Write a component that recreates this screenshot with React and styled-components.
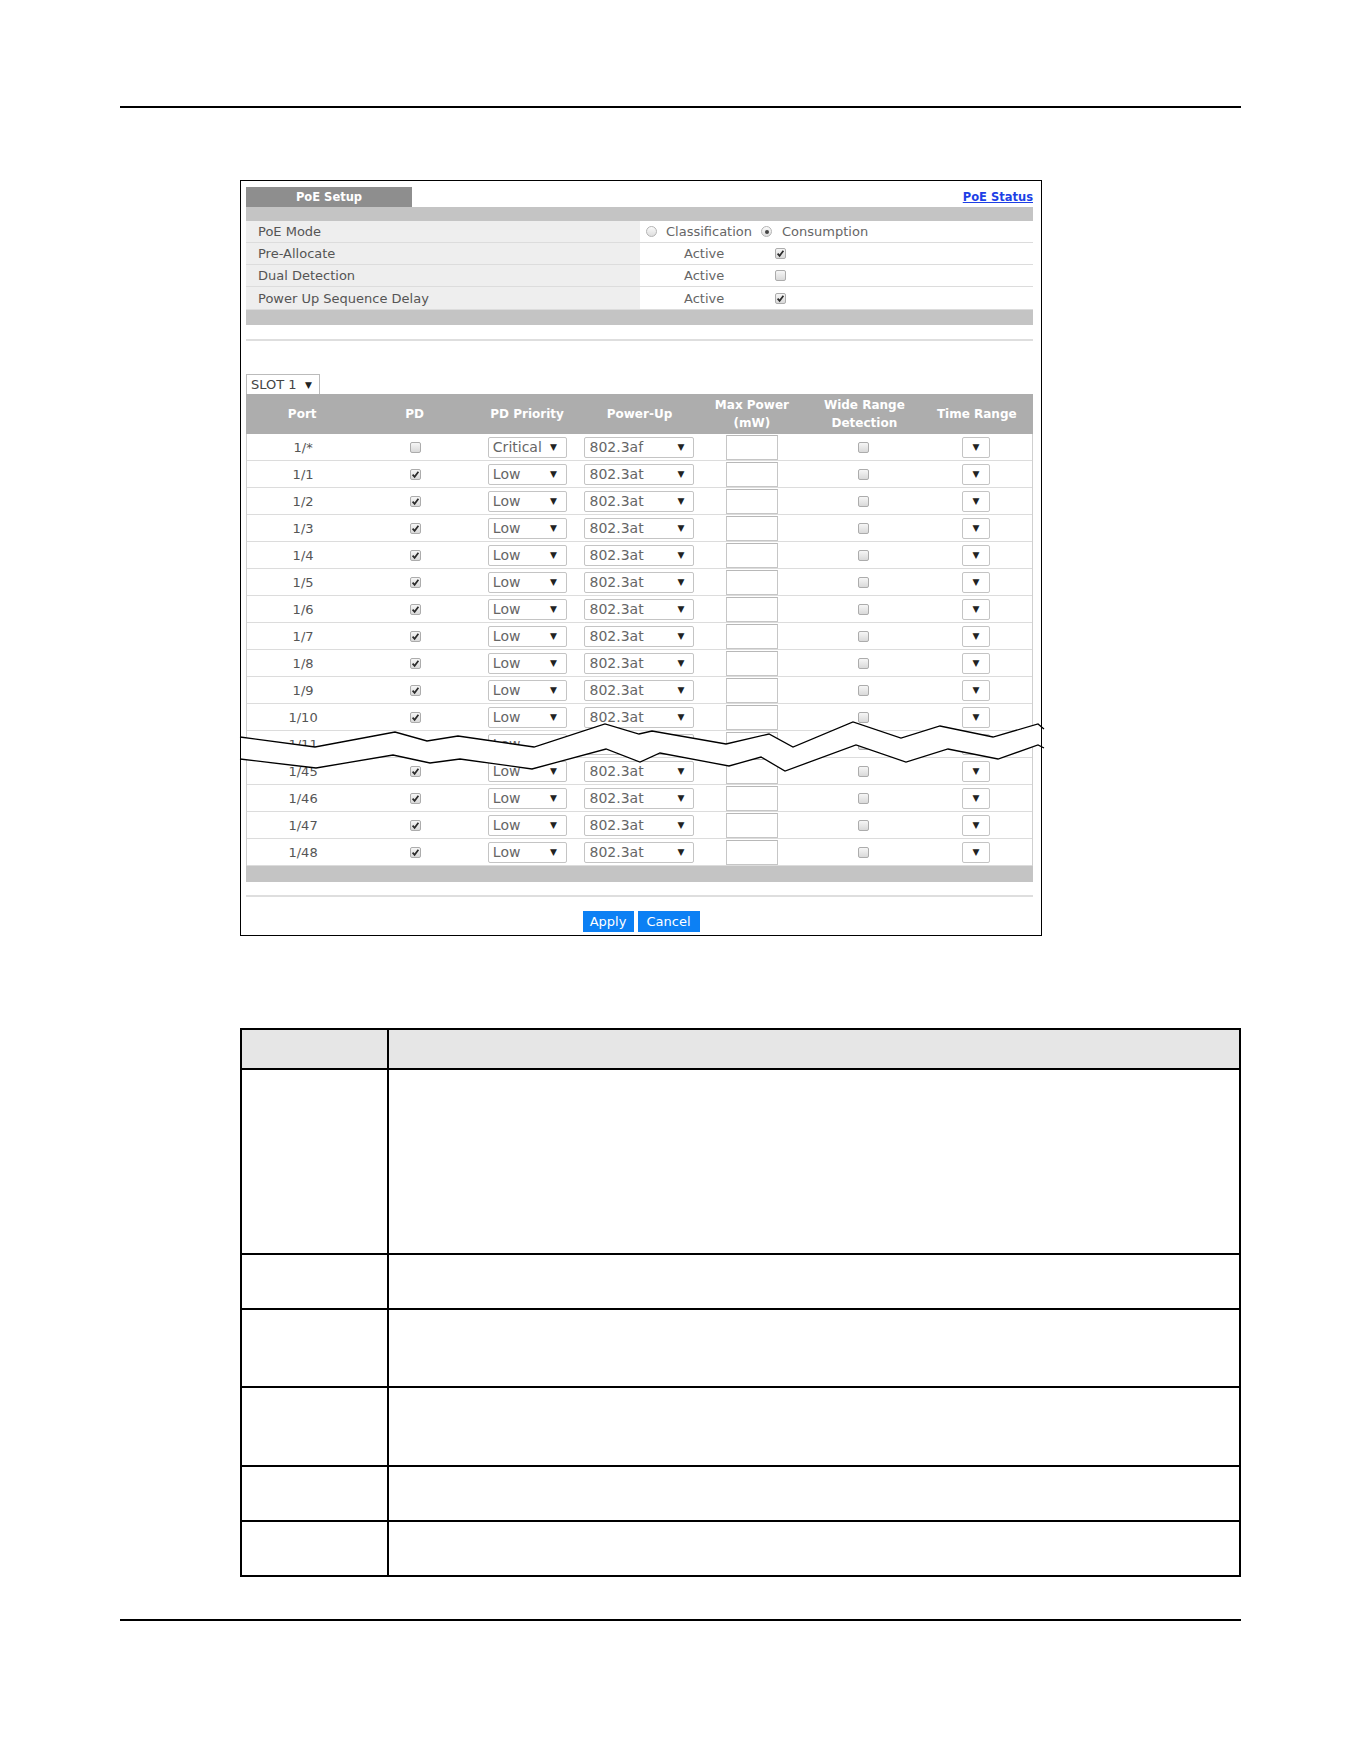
import React from 'react'
import styled, { createGlobalStyle } from 'styled-components'

const GlobalStyle = createGlobalStyle`
  html, body {
    margin: 0;
    padding: 0;
    background: #fff;
  }
  body {
    font-family: "DejaVu Sans", "Liberation Sans", sans-serif;
    color: #555;
  }
`

const Page = styled.div`
  padding: 106px 0 0 120px;
  width: 1121px;
`

const Rule = styled.div`
  height: 2px;
  background: #000;
`

const Panel = styled.div`
  position: relative;
  box-sizing: border-box;
  margin: 72px 0 0 120px;
  width: 802px;
  height: 756px;
  border: 1px solid #000;
  padding: 6px 8px 0 5px;
  display: flex;
  flex-direction: column;
`

const TitleRow = styled.div`
  display: flex;
  justify-content: space-between;
  align-items: center;
  height: 20px;
`

const Tab = styled.div`
  width: 166px;
  height: 20px;
  background: #8e8e8e;
  color: #fff;
  font-weight: bold;
  font-size: 11.5px;
  display: flex;
  align-items: center;
  justify-content: center;
`

const StatusLink = styled.a`
  color: #1d3fe6;
  font-weight: bold;
  font-size: 11.5px;
  text-decoration: underline;
  cursor: pointer;
`

const GrayBar = styled.div`
  height: ${p => p.$h || 14}px;
  background: #c4c4c4;
`

const SetupRow = styled.div`
  display: grid;
  grid-template-columns: 394px 1fr;
  height: ${p => p.$h || 22}px;
  border-bottom: 1px solid #dcdcdc;
  box-sizing: border-box;
  font-size: 13px;
`

const Label = styled.div`
  background: #eeeeee;
  padding-left: 12px;
  display: flex;
  align-items: center;
  color: #555;
`

const Value = styled.div`
  background: #fff;
  padding-left: ${p => p.$pad}px;
  display: flex;
  align-items: center;
  color: #666;
`

const RadioLabel = styled.span`
  margin: 0 9px 0 ${p => p.$ml || 9}px;
`

const Radio = styled.span`
  box-sizing: border-box;
  width: 11px;
  height: 11px;
  border-radius: 50%;
  border: 1px solid #b4b4b4;
  background: linear-gradient(#fafafa, #dedede);
  display: inline-flex;
  align-items: center;
  justify-content: center;
  &::after {
    content: '';
    width: 4px;
    height: 4px;
    border-radius: 50%;
    background: ${p => (p.$on ? '#444' : 'transparent')};
  }
`

const Box = styled.span`
  box-sizing: border-box;
  width: 11px;
  height: 11px;
  border-radius: 2px;
  border: 1px solid #acacac;
  background: linear-gradient(#f6f6f6, #d9d9d9);
  display: inline-flex;
  align-items: center;
  justify-content: center;
  margin-left: ${p => p.$ml || 0}px;
`

const Checkbox = ({ checked, ml }) => (
  <Box $ml={ml}>
    {checked && (
      <svg width="9" height="9" viewBox="0 0 9 9">
        <path d="M1.6 4.6 L3.6 6.8 L7.4 1.8" fill="none" stroke="#2b2b2b" strokeWidth="1.7" />
      </svg>
    )}
  </Box>
)

const Separator = styled.div`
  height: 2px;
  background: #dedede;
  margin-top: ${p => p.$mt}px;
`

const SlotSelect = styled.div`
  box-sizing: border-box;
  margin-top: 33px;
  width: 74px;
  height: 20px;
  border: 1px solid #bbb;
  border-bottom: none;
  padding: 0 7px 0 4px;
  display: flex;
  align-items: center;
  justify-content: space-between;
  font-size: 13px;
  color: #444;
`

const Arrow = styled.span`
  font-size: 9px;
  color: #222;
`

const HeaderRow = styled.div`
  display: grid;
  grid-template-columns: repeat(7, 1fr);
  height: 40px;
  background: #adadad;
  color: #fff;
  font-weight: bold;
  font-size: 12px;
  line-height: 18px;
`

const HeadCell = styled.div`
  display: flex;
  align-items: center;
  justify-content: center;
  text-align: center;
`

const Body = styled.div`
  border-left: 1px solid #cfcfcf;
  border-right: 1px solid #cfcfcf;
`

const PortRow = styled.div`
  display: grid;
  grid-template-columns: repeat(7, 1fr);
  height: 27px;
  box-sizing: border-box;
  border-bottom: 1px solid #dcdcdc;
  font-size: 13px;
  color: #555;
`

const Cell = styled.div`
  display: flex;
  align-items: center;
  justify-content: center;
`

const Select = styled.div`
  box-sizing: border-box;
  width: ${p => p.$w}px;
  height: 21px;
  border: 1px solid #c4c4c4;
  border-radius: 2px;
  background: #fff;
  display: flex;
  align-items: center;
  justify-content: ${p => (p.$center ? 'center' : 'space-between')};
  padding: ${p => (p.$center ? '0' : '0 9px 0 4px')};
  color: #666;
  font-size: 14px;
`

const PowerInput = styled.div`
  box-sizing: border-box;
  width: 52px;
  height: 25px;
  border: 1px solid #c6c6c6;
  border-top-color: #b8b8b8;
  background: #fff;
`

const Actions = styled.div`
  margin-top: 14px;
  display: flex;
  justify-content: center;
  gap: 4px;
  padding-left: 3px;
`

const Button = styled.button`
  width: ${p => p.$w}px;
  height: 21px;
  border: none;
  background: #0c80f4;
  color: #fff;
  font-family: "DejaVu Sans", sans-serif;
  font-size: 13px;
  padding: 0;
`

const BreakMark = styled.svg`
  position: absolute;
  left: -1px;
  top: -1px;
  overflow: visible;
  pointer-events: none;
`

const DescTable = styled.div`
  margin: 92px 0 0 120px;
  width: 1001px;
  box-sizing: border-box;
  border: 2px solid #000;
`

const DescRow = styled.div`
  display: grid;
  grid-template-columns: 147px 1fr;
  height: ${p => p.$h}px;
  box-sizing: border-box;
  border-bottom: ${p => (p.$last ? 'none' : '2px solid #000')};
  background: ${p => (p.$head ? '#e6e6e6' : '#fff')};
`

const DescCell = styled.div`
  border-right: ${p => (p.$first ? '2px solid #000' : 'none')};
`

const BottomRule = styled(Rule)`
  margin-top: 42px;
`

const ports = [
  '1/*', '1/1', '1/2', '1/3', '1/4', '1/5', '1/6', '1/7', '1/8', '1/9', '1/10', '1/11',
  '1/45', '1/46', '1/47', '1/48',
]

// break mark drawn across the port list (rows 1/12 .. 1/44 left out)
const upper = [
  [0, 557], [75, 567], [155, 552], [187, 561], [218, 556], [294, 567], [365, 544], [399, 554],
  [412, 551], [486, 564], [529, 554], [553, 567], [613, 542], [661, 558], [700, 546], [753, 557],
  [798, 544], [804, 549],
]
const lower = [
  [0, 579], [76, 588], [153, 575], [190, 583], [220, 579], [292, 589], [366, 569], [400, 582],
  [420, 573], [489, 586], [521, 577], [545, 591], [616, 565], [666, 582], [708, 569], [758, 579],
  [798, 565], [804, 568],
]

const pts = arr => arr.map(p => p.join(',')).join(' ')
const fillPts =
  pts([[1, 557], ...upper.slice(1, -1), [801, 546.5]]) +
  ' ' +
  pts([[801, 566.5], ...lower.slice(1, -1).reverse(), [1, 579]])

const descRows = [185, 55, 78, 79, 55, 53]

const App = () => (
  <Page>
    <GlobalStyle />
    <Rule />
    <Panel>
      <TitleRow>
        <Tab>PoE Setup</Tab>
        <StatusLink>PoE Status</StatusLink>
      </TitleRow>
      <GrayBar />
      <SetupRow>
        <Label>PoE Mode</Label>
        <Value $pad={6}>
          <Radio />
          <RadioLabel>Classification</RadioLabel>
          <Radio $on />
          <RadioLabel $ml={10}>Consumption</RadioLabel>
        </Value>
      </SetupRow>
      <SetupRow>
        <Label>Pre-Allocate</Label>
        <Value $pad={44}>
          Active
          <Checkbox checked ml={51} />
        </Value>
      </SetupRow>
      <SetupRow>
        <Label>Dual Detection</Label>
        <Value $pad={44}>
          Active
          <Checkbox ml={51} />
        </Value>
      </SetupRow>
      <SetupRow $h={23}>
        <Label>Power Up Sequence Delay</Label>
        <Value $pad={44}>
          Active
          <Checkbox checked ml={51} />
        </Value>
      </SetupRow>
      <GrayBar $h={15} />
      <Separator $mt={14} />

      <SlotSelect>
        SLOT 1 <Arrow>▼</Arrow>
      </SlotSelect>
      <HeaderRow>
        <HeadCell>Port</HeadCell>
        <HeadCell>PD</HeadCell>
        <HeadCell>PD Priority</HeadCell>
        <HeadCell>Power-Up</HeadCell>
        <HeadCell>
          Max Power
          <br />
          (mW)
        </HeadCell>
        <HeadCell>
          Wide Range
          <br />
          Detection
        </HeadCell>
        <HeadCell>Time Range</HeadCell>
      </HeaderRow>
      <Body>
        {ports.map((port, i) => (
          <PortRow key={port}>
            <Cell>{port}</Cell>
            <Cell>
              <Checkbox checked={i > 0} />
            </Cell>
            <Cell>
              <Select $w={79}>
                {i === 0 ? 'Critical' : 'Low'}
                <Arrow>▼</Arrow>
              </Select>
            </Cell>
            <Cell>
              <Select $w={110}>
                {i === 0 ? '802.3af' : '802.3at'}
                <Arrow>▼</Arrow>
              </Select>
            </Cell>
            <Cell>
              <PowerInput />
            </Cell>
            <Cell>
              <Checkbox />
            </Cell>
            <Cell>
              <Select $w={28} $center>
                <Arrow>▼</Arrow>
              </Select>
            </Cell>
          </PortRow>
        ))}
      </Body>
      <GrayBar $h={16} />
      <Separator $mt={13} />
      <Actions>
        <Button $w={51}>Apply</Button>
        <Button $w={62}>Cancel</Button>
      </Actions>

      <BreakMark width="802" height="755" viewBox="0 0 802 755">
        <polygon points={fillPts} fill="#fff" />
        <polyline points={pts(upper)} fill="none" stroke="#000" strokeWidth="1.3" />
        <polyline points={pts(lower)} fill="none" stroke="#000" strokeWidth="1.3" />
      </BreakMark>
    </Panel>

    <DescTable>
      <DescRow $h={40} $head>
        <DescCell $first />
        <DescCell />
      </DescRow>
      {descRows.map((h, i) => (
        <DescRow key={i} $h={h} $last={i === descRows.length - 1}>
          <DescCell $first />
          <DescCell />
        </DescRow>
      ))}
    </DescTable>
    <BottomRule />
  </Page>
)

export default App
